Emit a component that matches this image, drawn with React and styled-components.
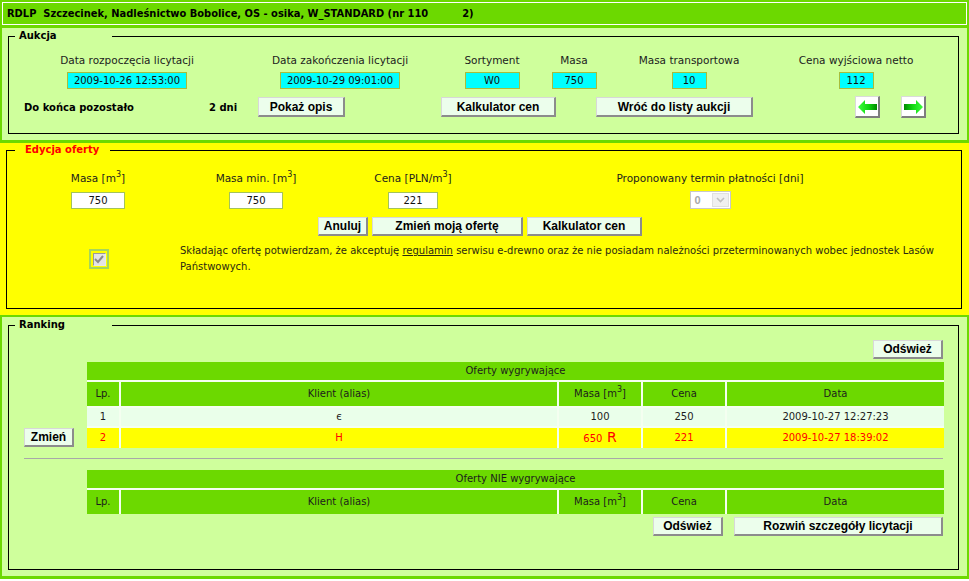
import React from 'react';
import styled, { createGlobalStyle } from 'styled-components';

const GREEN = '#6cd900';
const LIGHT = '#cfff9c';
const YELLOW = '#ffff00';
const PALE = '#eaffea';
const RED = '#ff0000';

const GlobalStyle = createGlobalStyle`
  html, body { margin: 0; padding: 0; background: #fff; }
  body {
    font-family: "DejaVu Sans", Verdana, sans-serif;
    font-size: 10.5px;
    color: #1c1c1c;
  }
  * { box-sizing: border-box; }
`;

const Page = styled.div`
  width: 969px;
`;

const TitleBar = styled.header`
  background: ${GREEN};
  padding: 2px 2px 3px 2px;
`;

const TitleInner = styled.div`
  border: 1px solid #fff;
  height: 23px;
  line-height: 21px;
  padding-left: 4px;
  font-family: "DejaVu Sans Condensed", "DejaVu Sans", sans-serif;
  font-weight: bold;
  font-size: 11px;
  color: #000;
  white-space: nowrap;
`;

const Redacted = styled.span`
  display: inline-block;
  width: 34px;
`;

const Section = styled.section`
  background: ${(p) => p.$bg};
  border-style: solid;
  border-color: ${GREEN};
  border-width: ${(p) => p.$borders};
  padding: ${(p) => p.$pad};
`;

const Fieldset = styled.fieldset`
  margin: 0;
  padding: 0;
  border: 1px solid #000;
  min-width: 0;
`;

const Legend = styled.legend`
  box-sizing: border-box;
  width: ${(p) => p.$w}px;
  margin-left: ${(p) => p.$ml}px;
  padding: 0 0 0 ${(p) => p.$pl}px;
  font-weight: bold;
  font-size: 10px;
  line-height: 14px;
  color: ${(p) => p.$color || '#000'};
`;

const Body = styled.div`
  padding: ${(p) => p.$pad};
`;

/* ---------- Aukcja ---------- */

const InfoGrid = styled.div`
  display: grid;
  grid-template-columns: 236px 190px 114px 50px 180px 154px;
  row-gap: 5px;
  justify-items: center;
`;

const Label = styled.div`
  line-height: 14px;
  white-space: nowrap;
  color: #1c1c1c;
`;

const ValueBox = styled.div`
  width: ${(p) => p.$w}px;
  height: 17px;
  line-height: 15px;
  font-size: 10px;
  background: #00ffff;
  border: 1px solid #a9bd3a;
  text-align: center;
  color: #111;
`;

const ActionRow = styled.div`
  display: flex;
  align-items: center;
  height: 22px;
  margin-top: 7px;
  padding-left: 15px;
`;

const Strong = styled.div`
  width: ${(p) => p.$w}px;
  font-weight: bold;
  font-size: 10px;
  color: #000;
  white-space: nowrap;
`;

const Button = styled.button`
  width: ${(p) => p.$w}px;
  height: ${(p) => p.$h || 20}px;
  margin: 0 0 0 ${(p) => p.$ml || 0}px;
  padding: 0;
  background: #ecfeec;
  border: 1px solid #d8d8d8;
  border-right: 2px solid #8c8c8c;
  border-bottom: 2px solid #8c8c8c;
  font: bold 12px "Liberation Sans", Arial, sans-serif;
  color: #000;
  white-space: nowrap;
  flex: none;
`;

const ArrowButton = styled.button`
  width: 25px;
  height: 22px;
  margin: 0 0 0 ${(p) => p.$ml || 0}px;
  padding: 0;
  background: #fff;
  border: 1px solid #dadada;
  border-right: 2px solid #7e7e7e;
  border-bottom: 2px solid #7e7e7e;
  display: flex;
  align-items: center;
  justify-content: center;
  flex: none;
`;

const Arrow = ({ dir }) => (
  <svg width="19" height="14" viewBox="0 0 19 14">
    <defs>
      <linearGradient id={`g-${dir}`} x1={dir === 'left' ? '0' : '1'} x2={dir === 'left' ? '1' : '0'} y1="0" y2="0">
        <stop offset="0" stopColor="#3cff3c" />
        <stop offset="0.55" stopColor="#10d810" />
        <stop offset="1" stopColor="#008a00" />
      </linearGradient>
    </defs>
    <polygon
      points={dir === 'left' ? '0,7 7,0 7,4 19,4 19,10 7,10 7,14' : '19,7 12,0 12,4 0,4 0,10 12,10 12,14'}
      fill={`url(#g-${dir})`}
    />
  </svg>
);

/* ---------- Edycja ---------- */

const OfferGrid = styled.div`
  display: grid;
  grid-template-columns: 182px 134px 180px 414px;
  row-gap: 6px;
  justify-items: center;
  align-items: center;
`;

const Sup = styled.sup`
  font-size: 8px;
  line-height: 0;
  vertical-align: 5px;
`;

const TextInput = styled.div`
  width: ${(p) => p.$w}px;
  height: 17px;
  line-height: 15px;
  font-size: 10px;
  background: #fff;
  border: 1px solid #a3c35a;
  text-align: center;
  color: #111;
`;

const SelectBox = styled.div`
  width: 41px;
  height: 18px;
  display: flex;
  border: 1px solid #c8c8c8;
  background: #fff;
  color: #a8a8a8;
  font: bold 11px "Liberation Sans", Arial, sans-serif;
`;

const SelectValue = styled.span`
  flex: 1;
  padding-left: 4px;
  line-height: 16px;
`;

const SelectToggle = styled.span`
  width: 17px;
  margin: 1px;
  background: #f0f0f0;
  border: 1px solid #e0e0e0;
  display: flex;
  align-items: center;
  justify-content: center;
`;

const ButtonRow = styled.div`
  display: flex;
  gap: 4px;
  margin-top: 8px;
  padding-left: 311px;
`;

const ConsentRow = styled.div`
  display: grid;
  grid-template-columns: 173px 1fr;
  align-items: center;
  margin-top: 7px;
  padding-right: 14px;
`;

const CheckFrame = styled.div`
  width: 20px;
  height: 20px;
  margin-left: 82px;
  border: 2px solid #a6d65a;
  display: flex;
  align-items: center;
  justify-content: center;
`;

const CheckInner = styled.div`
  width: 13px;
  height: 13px;
  background: #e4e4e4;
  border: 1px solid #9a9a9a;
  border-right-color: #e8e8e8;
  border-bottom-color: #e8e8e8;
  display: flex;
  align-items: center;
  justify-content: center;
`;

const ConsentText = styled.p`
  margin: 0;
  font-size: 10px;
  line-height: 16px;
  color: #2a2a10;
`;

const Link = styled.a`
  color: inherit;
  text-decoration: underline;
`;

/* ---------- Ranking ---------- */

const TopBar = styled.div`
  display: flex;
  justify-content: flex-end;
  padding-right: 1px;
`;

const RankTable = styled.table`
  width: 920px;
  border-collapse: separate;
  border-spacing: 0;
  table-layout: fixed;
  font-size: 10px;
  margin-top: ${(p) => p.$mt || 0}px;
`;

const ActionCell = styled.td`
  padding: 0;
  vertical-align: middle;
`;

const GroupHead = styled.td`
  background: ${GREEN};
  height: 18px;
  padding: 0;
  line-height: 14px;
  text-align: center;
  color: #1c1c1c;
`;

const HeadCell = styled.td`
  background: ${GREEN};
  height: 26px;
  padding: 0;
  line-height: 14px;
  vertical-align: middle;
  text-align: center;
  color: #1c1c1c;
  border-top: 2px solid #f4fff0;
  border-left: ${(p) => (p.$sep ? '2px solid #f4fff0' : '0')};
`;

const DataCell = styled.td`
  background: ${(p) => p.$bg};
  color: ${(p) => p.$color};
  height: ${(p) => p.$h}px;
  padding: 0;
  line-height: 14px;
  vertical-align: middle;
  text-align: center;
  border-top: 2px solid #f4fff0;
  border-left: ${(p) => (p.$sep ? '2px solid #f4fff0' : '0')};
`;

const BigR = styled.span`
  font-size: 14px;
  line-height: 14px;
`;

const Rule = styled.hr`
  margin: 10px 1px 11px 0;
  border: 0;
  border-top: 1px solid #a8a8a8;
  height: 0;
`;

const BottomBar = styled.div`
  display: flex;
  justify-content: flex-end;
  gap: 11px;
  margin-top: 3px;
  padding-right: 1px;
`;

const Cols = () => (
  <colgroup>
    <col style={{ width: 63 }} />
    <col style={{ width: 32 }} />
    <col style={{ width: 438 }} />
    <col style={{ width: 84 }} />
    <col style={{ width: 84 }} />
    <col style={{ width: 219 }} />
  </colgroup>
);

const HeaderRows = ({ title }) => (
  <>
    <tr>
      <ActionCell />
      <GroupHead colSpan={5}>{title}</GroupHead>
    </tr>
    <tr>
      <ActionCell />
      <HeadCell>Lp.</HeadCell>
      <HeadCell $sep>Klient (alias)</HeadCell>
      <HeadCell $sep>
        Masa [m<Sup>3</Sup>]
      </HeadCell>
      <HeadCell $sep>Cena</HeadCell>
      <HeadCell $sep>Data</HeadCell>
    </tr>
  </>
);

const info = [
  { label: 'Data rozpoczęcia licytacji', value: '2009-10-26 12:53:00', w: 120 },
  { label: 'Data zakończenia licytacji', value: '2009-10-29 09:01:00', w: 120 },
  { label: 'Sortyment', value: 'W0', w: 55 },
  { label: 'Masa', value: '750', w: 45 },
  { label: 'Masa transportowa', value: '10', w: 35 },
  { label: 'Cena wyjściowa netto', value: '112', w: 35 },
];

const rows = [
  { lp: '1', client: 'є', masa: '100', cena: '250', data: '2009-10-27 12:27:23', bg: PALE, color: '#1c1c1c', h: 20 },
  { lp: '2', client: 'H', masa: '650', r: true, cena: '221', data: '2009-10-27 18:39:02', bg: YELLOW, color: RED, h: 22, action: true },
];

export default function App() {
  return (
    <Page>
      <GlobalStyle />
      <TitleBar>
        <TitleInner>
          RDLP&nbsp; Szczecinek, Nadleśnictwo Bobolice, OS - osika, W_STANDARD (nr 110<Redacted />2)
        </TitleInner>
      </TitleBar>

      <Section $bg={LIGHT} $borders="0 2px 3px 2px" $pad="1px 8px 6px 6px">
        <Fieldset>
          <Legend $w={97} $ml={6} $pl={4}>Aukcja</Legend>
          <Body $pad="10px 0 15px 0">
            <InfoGrid>
              {info.map((i) => (
                <Label key={i.label}>{i.label}</Label>
              ))}
              {info.map((i) => (
                <ValueBox key={i.label} $w={i.w}>
                  {i.value}
                </ValueBox>
              ))}
            </InfoGrid>
            <ActionRow>
              <Strong $w={185}>Do końca pozostało</Strong>
              <Strong $w={49}>2 dni</Strong>
              <Button $w={87}>Pokaż opis</Button>
              <Button $w={115} $ml={96}>Kalkulator cen</Button>
              <Button $w={157} $ml={40}>Wróć do listy aukcji</Button>
              <ArrowButton $ml={102} aria-label="Poprzednia">
                <Arrow dir="left" />
              </ArrowButton>
              <ArrowButton $ml={21} aria-label="Następna">
                <Arrow dir="right" />
              </ArrowButton>
            </ActionRow>
          </Body>
        </Fieldset>
      </Section>

      <Section $bg={YELLOW} $borders="0" $pad="0 7px 6px 6px">
        <Fieldset>
          <Legend $w={95} $ml={8} $pl={10} $color={RED}>Edycja oferty</Legend>
          <Body $pad="14px 0 33px 0">
            <OfferGrid>
              <Label>
                Masa [m<Sup>3</Sup>]
              </Label>
              <Label>
                Masa min. [m<Sup>3</Sup>]
              </Label>
              <Label>
                Cena [PLN/m<Sup>3</Sup>]
              </Label>
              <Label>Proponowany termin płatności [dni]</Label>
              <TextInput $w={54}>750</TextInput>
              <TextInput $w={54}>750</TextInput>
              <TextInput $w={50}>221</TextInput>
              <SelectBox>
                <SelectValue>0</SelectValue>
                <SelectToggle>
                  <svg width="9" height="6" viewBox="0 0 9 6">
                    <polyline points="1,1 4.5,4.5 8,1" fill="none" stroke="#c0c0c0" strokeWidth="1.6" />
                  </svg>
                </SelectToggle>
              </SelectBox>
            </OfferGrid>
            <ButtonRow>
              <Button $w={50} $h={19}>Anuluj</Button>
              <Button $w={151} $h={19}>Zmień moją ofertę</Button>
              <Button $w={115} $h={19}>Kalkulator cen</Button>
            </ButtonRow>
            <ConsentRow>
              <CheckFrame>
                <CheckInner>
                  <svg width="10" height="9" viewBox="0 0 10 9">
                    <polyline points="1,4 4,7 9,1" fill="none" stroke="#8a8a8a" strokeWidth="2" />
                  </svg>
                </CheckInner>
              </CheckFrame>
              <ConsentText>
                Składając ofertę potwierdzam, że akceptuję <Link>regulamin</Link> serwisu e-drewno oraz że nie posiadam
                należności przeterminowanych wobec jednostek Lasów Państwowych.
              </ConsentText>
            </ConsentRow>
          </Body>
        </Fieldset>
      </Section>

      <Section $bg={LIGHT} $borders="2px 2px 3px 2px" $pad="1px 8px 6px 6px">
        <Fieldset>
          <Legend $w={97} $ml={6} $pl={4}>Ranking</Legend>
          <Body $pad="8px 14px 33px 15px">
            <TopBar>
              <Button $w={70} $h={19}>Odśwież</Button>
            </TopBar>
            <RankTable $mt={3}>
              <Cols />
              <tbody>
                <HeaderRows title="Oferty wygrywające" />
                {rows.map((r) => (
                  <tr key={r.lp}>
                    <ActionCell>{r.action && <Button $w={50} $h={19}>Zmień</Button>}</ActionCell>
                    <DataCell $bg={r.bg} $color={r.color} $h={r.h}>{r.lp}</DataCell>
                    <DataCell $bg={r.bg} $color={r.color} $h={r.h} $sep>{r.client}</DataCell>
                    <DataCell $bg={r.bg} $color={r.color} $h={r.h} $sep>
                      {r.masa}
                      {r.r && <BigR> R</BigR>}
                    </DataCell>
                    <DataCell $bg={r.bg} $color={r.color} $h={r.h} $sep>{r.cena}</DataCell>
                    <DataCell $bg={r.bg} $color={r.color} $h={r.h} $sep>{r.data}</DataCell>
                  </tr>
                ))}
              </tbody>
            </RankTable>
            <Rule />
            <RankTable>
              <Cols />
              <tbody>
                <HeaderRows title="Oferty NIE wygrywające" />
              </tbody>
            </RankTable>
            <BottomBar>
              <Button $w={70} $h={19}>Odśwież</Button>
              <Button $w={209} $h={19}>Rozwiń szczegóły licytacji</Button>
            </BottomBar>
          </Body>
        </Fieldset>
      </Section>
    </Page>
  );
}
